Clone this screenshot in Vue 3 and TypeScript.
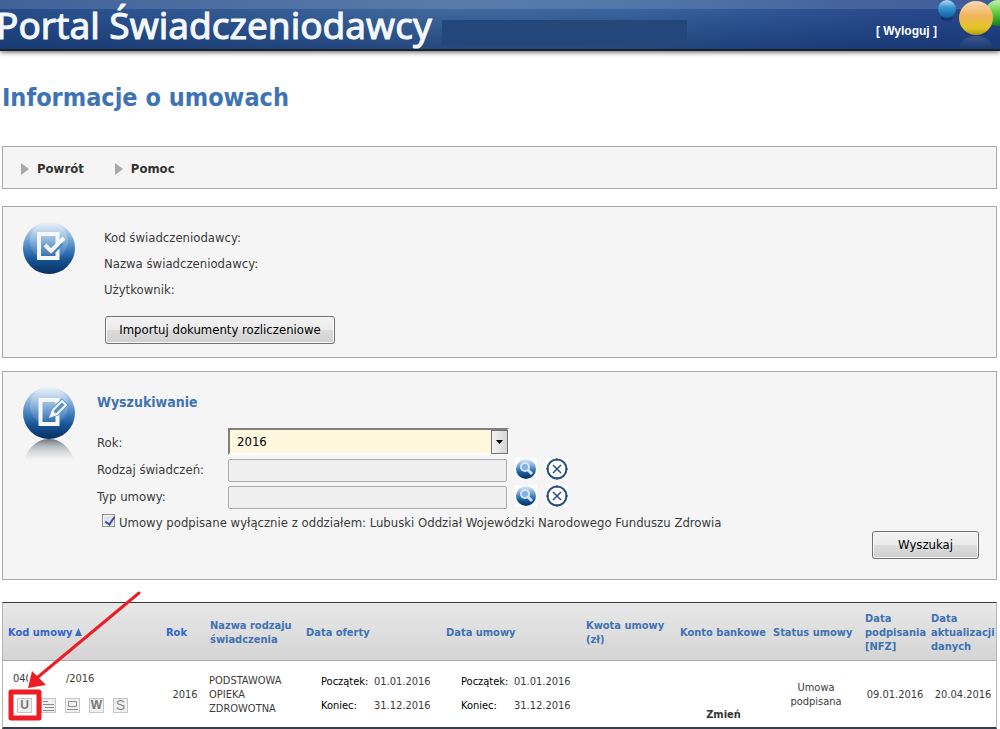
<script setup lang="ts">
import { ref } from 'vue'

const year = ref('2016')
const kind = ref('')
const contractType = ref('')
const onlyBranch = ref(true)

const columns = [
  { key: 'code', lines: ['Kod umowy'], sorted: true, active: true },
  { key: 'year', lines: ['Rok'], sorted: false, active: true },
  { key: 'name', lines: ['Nazwa rodzaju', 'świadczenia'] },
  { key: 'offer', lines: ['Data oferty'] },
  { key: 'contract', lines: ['Data umowy'] },
  { key: 'amount', lines: ['Kwota umowy', '(zł)'] },
  { key: 'account', lines: ['Konto bankowe'] },
  { key: 'status', lines: ['Status umowy'] },
  { key: 'signed', lines: ['Data', 'podpisania', '[NFZ]'] },
  { key: 'updated', lines: ['Data', 'aktualizacji', 'danych'] },
]
const lookups = [
  { id: 'kind', label: 'Rodzaj świadczeń:', model: kind },
  { id: 'type', label: 'Typ umowy:', model: contractType },
]
</script>

<template>
  <div class="page">
    <header class="top">
      <div class="brand">Portal Świadczeniodawcy</div>
      <div class="mask"></div>
      <a class="logout" href="#">[ Wyloguj ]</a>
      <svg class="balls" width="64" height="49" viewBox="0 0 64 49" aria-hidden="true">
        <defs>
          <linearGradient id="bb" x1="0" y1="0" x2="0" y2="1">
            <stop offset="0" stop-color="#b5dcf0" /><stop offset=".4" stop-color="#3d97d2" /><stop offset="1" stop-color="#0b5f9f" />
          </linearGradient>
          <linearGradient id="by" x1="0" y1="0" x2="0" y2="1">
            <stop offset="0" stop-color="#fbd9b4" /><stop offset=".45" stop-color="#f0b45a" /><stop offset=".8" stop-color="#e2c522" /><stop offset="1" stop-color="#b39a18" />
          </linearGradient>
          <linearGradient id="bg" x1="0" y1="0" x2="0" y2="1">
            <stop offset="0" stop-color="#c9f3ae" /><stop offset=".5" stop-color="#5bcb3c" /><stop offset="1" stop-color="#167c1c" />
          </linearGradient>
          <linearGradient id="br" x1="0" y1="0" x2="0" y2="1">
            <stop offset="0" stop-color="#8c96a0" stop-opacity=".3" /><stop offset="1" stop-color="#8c96a0" stop-opacity="0" />
          </linearGradient>
        </defs>
        <ellipse cx="11" cy="18" rx="6" ry="3" fill="#0c2450" opacity=".5" />
        <circle cx="11" cy="9" r="9" fill="url(#bb)" />
        <circle cx="62" cy="13" r="13" fill="url(#bg)" />
        <path d="M23 49a17 13 0 0 1 34 0z" fill="url(#br)" />
        <circle cx="40" cy="18" r="17" fill="url(#by)" />
      </svg>
    </header>

    <main>
      <h1>Informacje o umowach</h1>

      <nav class="box menu">
        <a href="#"><svg width="8" height="12" viewBox="0 0 8 12"><path d="M0 0L8 6L0 12z" fill="#a9a9a9" /></svg>Powrót</a>
        <a href="#"><svg width="8" height="12" viewBox="0 0 8 12"><path d="M0 0L8 6L0 12z" fill="#a9a9a9" /></svg>Pomoc</a>
      </nav>

      <section class="box provider">
        <svg class="orb" width="54" height="54" viewBox="0 0 54 54" aria-hidden="true">
          <defs>
            <linearGradient id="orb" x1="0" y1="0" x2="0" y2="1">
              <stop offset="0" stop-color="#e6eff8" /><stop offset=".22" stop-color="#9dbfe2" /><stop offset=".5" stop-color="#4583c2" /><stop offset=".72" stop-color="#175596" /><stop offset="1" stop-color="#072f60" />
            </linearGradient>
            <linearGradient id="shine" x1="0" y1="0" x2="0" y2="1">
              <stop offset="0" stop-color="#fff" stop-opacity=".3" /><stop offset="1" stop-color="#fff" stop-opacity=".08" />
            </linearGradient>
          </defs>
          <circle cx="27" cy="27" r="26" fill="url(#orb)" />
          <circle cx="27" cy="20" r="19" fill="url(#shine)" />
          <path d="M17 13H35.500V37H17z" fill="none" stroke="#f4f8fc" stroke-width="4" />
          <path d="M32 30L40 22" stroke="#4583c2" stroke-width="4" />
          <path d="M23 24L29 30L42 17" fill="none" stroke="#f4f8fc" stroke-width="4" />
        </svg>
        <div class="provider-body">
          <p>Kod świadczeniodawcy:</p>
          <p>Nazwa świadczeniodawcy:</p>
          <p>Użytkownik:</p>
          <button type="button" class="btn import">Importuj dokumenty rozliczeniowe</button>
        </div>
      </section>

      <form class="box search" @submit.prevent>
        <svg class="orb" width="54" height="76" viewBox="0 0 54 76" aria-hidden="true">
          <defs>
            <linearGradient id="refl" x1="0" y1="0" x2="0" y2="1">
              <stop offset="0" stop-color="#59636d" stop-opacity=".9" /><stop offset=".35" stop-color="#8d959c" stop-opacity=".6" /><stop offset="1" stop-color="#b0b5ba" stop-opacity="0" />
            </linearGradient>
          </defs>
          <path d="M2 74C7 60 16 53 27 53S47 60 52 74z" fill="url(#refl)" />
          <circle cx="27" cy="27" r="26" fill="url(#orb)" />
          <circle cx="27" cy="20" r="19" fill="url(#shine)" />
          <path d="M18.500 14H35.500V38H18.500z" fill="none" stroke="#f4f8fc" stroke-width="4" />
          <path d="M30 29L31 24L40 15L44 19L35 28z" fill="#5d93c9" stroke="#5d93c9" stroke-width="4" />
          <path d="M30 29L31 24L40 15L44 19L35 28z" fill="#5d93c9" stroke="#f4f8fc" stroke-width="2" />
          <path d="M27 32L30 24L35 29z" fill="#f4f8fc" />
        </svg>
        <div class="search-body">
          <h2>Wyszukiwanie</h2>
          <div class="row">
            <label for="year">Rok:</label>
            <div class="select">
              <select id="year" v-model="year"><option>2016</option><option>2015</option></select>
              <span class="drop"><svg width="7" height="4" viewBox="0 0 7 4"><path d="M0 0H7L3.500 4z" fill="#000" /></svg></span>
            </div>
          </div>
          <div v-for="l in lookups" :key="l.id" class="row">
            <label :for="l.id">{{ l.label }}</label>
            <input :id="l.id" v-model="l.model.value" class="field" type="text" readonly />
            <button type="button" class="icon" aria-label="Szukaj">
              <svg width="22" height="22" viewBox="0 0 22 22">
                <circle cx="11" cy="11" r="10" fill="url(#orb)" />
                <circle cx="10" cy="9" r="4" fill="#7fb0de" stroke="#d3e5f6" stroke-width="2" />
                <path d="M13 12L17 16" stroke="#d3e5f6" stroke-width="3" />
              </svg>
            </button>
            <button type="button" class="icon" aria-label="Wyczyść">
              <svg width="22" height="22" viewBox="0 0 22 22" fill="none" stroke="#2c4f7c">
                <circle cx="11" cy="11" r="9.500" stroke-width="2" />
                <path d="M7 7L15 15M15 7L7 15" stroke-width="1.500" />
                <path d="M11 0V3M11 19V22M0 11H3M19 11H22" stroke-width="1" />
              </svg>
            </button>
          </div>
          <label class="check">
            <input v-model="onlyBranch" type="checkbox" />
            <span>Umowy podpisane wyłącznie z oddziałem: Lubuski Oddział Wojewódzki Narodowego Funduszu Zdrowia</span>
          </label>
          <div class="actions"><button type="submit" class="btn submit">Wyszukaj</button></div>
        </div>
      </form>

      <div class="results">
        <table>
          <colgroup><col v-for="c in columns" :key="c.key" :class="'c-' + c.key" /></colgroup>
          <thead>
            <tr>
              <th v-for="c in columns" :key="c.key" scope="col" :class="{ active: c.active }">
                <template v-for="(line, i) in c.lines" :key="i"><br v-if="i" />{{ line }}</template>
                <svg v-if="c.sorted" class="sort" width="7" height="8" viewBox="0 0 7 8"><path d="M3.500 0L7 8H0z" fill="#3a6fb5" /></svg>
              </th>
            </tr>
          </thead>
          <tbody>
            <tr>
              <td class="code">
                <div class="number"><span>040</span><span class="cover"></span><span>/2016</span></div>
                <div class="tools">
                  <button type="button" class="tool bold">U</button>
                  <button type="button" class="tool" aria-label="Lista">
                    <svg width="13" height="13" viewBox="0 0 13 13"><path d="M1 2.500H6M1 5.500H12M3 8.500H12M1 11.500H12" stroke="#8c8c8c" /></svg>
                  </button>
                  <button type="button" class="tool" aria-label="Dokument">
                    <svg width="13" height="13" viewBox="0 0 13 13"><path d="M2.500 2.500H10.500V7.500H2.500zM1 10.500H12" fill="none" stroke="#8c8c8c" /></svg>
                  </button>
                  <button type="button" class="tool bold">W</button>
                  <button type="button" class="tool">S</button>
                </div>
              </td>
              <td class="center year">2016</td>
              <td class="kind">PODSTAWOWA<br />OPIEKA<br />ZDROWOTNA</td>
              <td v-for="n in 2" :key="n">
                <dl>
                  <dt>Początek:</dt><dd>01.01.2016</dd>
                  <dt>Koniec:</dt><dd>31.12.2016</dd>
                </dl>
              </td>
              <td></td>
              <td class="account"><a href="#">Zmień</a></td>
              <td class="center status">Umowa<br />podpisana</td>
              <td class="center signed">09.01.2016</td>
              <td class="center updated">20.04.2016</td>
            </tr>
          </tbody>
        </table>
        <svg class="pointer" width="150" height="134" viewBox="0 0 150 134" aria-hidden="true">
          <path d="M139 4L38 88" stroke="#ee1c24" stroke-width="3" stroke-linecap="round" />
          <path d="M28 99L32 82L46 96z" fill="#ee1c24" />
          <rect x="11" y="103" width="28" height="26" fill="none" stroke="#ee1c24" stroke-width="5" stroke-linejoin="round" />
        </svg>
      </div>
    </main>
  </div>
</template>

<style>
body { background: #fff; }
</style>

<style scoped>
* { box-sizing: border-box; }
.page {
  font-family: "DejaVu Sans Condensed", "DejaVu Sans", sans-serif;
  font-size: 13px;
  line-height: 16px;
  color: #3b3b3b;
  overflow: hidden;
}
.top {
  position: relative;
  display: flex;
  align-items: center;
  height: 51px;
  border-bottom: 2px solid #1c2028;
  box-shadow: 0 1px 5px #555;
  background:
    linear-gradient(rgba(255, 255, 255, .12) 9px, transparent 9px, rgba(10, 40, 95, .5)),
    linear-gradient(90deg, #264c8a, #41699f 45%, #3a659e 62%, #2b4e90 85%, #25468a);
}
.brand {
  font: 400 37px/48px "Noto Sans", sans-serif;
  -webkit-text-stroke: 1px #f4f8ff;
  color: #f4f8ff;
  white-space: nowrap;
  margin-left: -4px;
  width: 446px;
}
.mask { width: 245px; height: 26px; margin-top: 16px; background: #23467b; }
.logout {
  margin-left: auto;
  margin-right: 63px;
  margin-top: 12px;
  font: bold 12px/16px "Liberation Sans", Arial, sans-serif;
  color: #fff;
  text-decoration: none;
}
.balls { position: absolute; right: 0; top: 0; }
main { padding: 0 3px 0 2px; }
h1 { margin: 30px 0 32px; font-size: 25px; line-height: 33px; color: #4073b3; }
.box { border: 1px solid #a9a9a9; background: #f5f5f5; }
.menu { display: flex; gap: 31px; height: 43px; align-items: center; padding: 2px 0 0 18px; }
.menu a { display: flex; align-items: center; gap: 8px; font-weight: bold; color: #333; text-decoration: none; }
.provider { display: flex; margin-top: 17px; padding: 14px 19px 13px; min-height: 151px; }
.orb { flex: none; }
.provider-body { margin-left: 28px; padding-top: 9px; }
.provider-body p { margin: 0 0 10px; }
.btn {
  font: inherit;
  color: #000;
  height: 28px;
  border: 1px solid #707070;
  border-radius: 3px;
  background: linear-gradient(#f2f2f2, #ebebeb 50%, #ddd 50%, #cfcfcf);
  box-shadow: inset 0 0 0 1px #fbfbfb;
}
.import { margin: 8px 0 0 1px; width: 230px; padding: 0; }
.search { display: flex; margin-top: 13px; padding: 14px 17px 20px 19px; min-height: 209px; }
.search-body { flex: 1; margin-left: 21px; min-width: 0; }
h2 { margin: 8px 0 18px; font-size: 14px; line-height: 16px; color: #4073b3; }
.row { display: flex; align-items: center; height: 27px; }
.row label { width: 131px; padding-top: 2px; }
.select { position: relative; width: 281px; height: 27px; }
select {
  appearance: none;
  width: 100%;
  height: 27px;
  padding: 0 7px;
  font: inherit;
  color: #000;
  background: #fff8df;
  border: 2px solid #808080;
  border-right-color: #fff;
  border-bottom-color: #fff;
  border-radius: 0;
}
.drop {
  position: absolute;
  top: 2px;
  right: 1px;
  width: 17px;
  height: 24px;
  display: flex;
  align-items: center;
  justify-content: center;
  border: 1px solid #707070;
  background: linear-gradient(90deg, #f3f3f3, #d5d5d5);
  pointer-events: none;
}
.field { width: 279px; height: 23px; margin: 4px 8px 0 0; border: 1px solid #ababab; border-radius: 2px; background: #efefef; font: inherit; }
.icon { padding: 0; border: 0; background: #fbfdfe; width: 22px; height: 22px; margin: 0 9px 0 0; }
.icon svg { display: block; }
.check { display: flex; align-items: center; gap: 4px; margin: 4px 0 0 5px; height: 20px; }
.check input {
  appearance: none;
  width: 13px;
  height: 13px;
  margin: 0 0 6px;
  border: 1px solid #8e8f8f;
  background: #dfe3ea;
  box-shadow: inset 0 0 0 1px #f6f6f6;
}
.check input:checked::after {
  content: "";
  display: block;
  width: 4px;
  height: 8px;
  margin: 0 0 0 4px;
  border: solid #3c4f92;
  border-width: 0 2px 2px 0;
  transform: rotate(35deg);
}
.actions { display: flex; justify-content: flex-end; margin-top: -2px; }
.submit { width: 107px; }
.results { position: relative; margin-top: 22px; }
table { width: 100%; table-layout: fixed; border-collapse: separate; border-spacing: 0; font-size: 11px; line-height: 14px; border: 1px solid #b5b5b5; border-top-color: #3b3b3b; border-bottom: 2px solid #333d4c; }
.c-code { width: 158px; }
.c-year { width: 44px; }
.c-name { width: 96px; }
.c-offer, .c-contract { width: 140px; }
.c-amount { width: 94px; }
.c-account { width: 93px; }
.c-status { width: 92px; }
.c-signed { width: 66px; }
.c-updated { width: 70px; }
th {
  height: 58px;
  padding: 2px 0 0 5px;
  text-align: left;
  white-space: nowrap;
  color: #4073b3;
  background: linear-gradient(#e8e8e8, #d5d5d5);
  border-bottom: 1px solid #a9a9a9;
}
th.active { color: #3366cc; }
.sort { margin-left: 2px; }
td { height: 66px; padding: 0; color: #3b3b3b; }
.code { padding-left: 10px; vertical-align: top; }
.number { display: flex; margin-top: 11px; }
.cover { position: relative; width: 37px; margin: 0 1px 0 -4px; background: #fff; }
.tools { display: flex; gap: 9px; margin: 12px 0 0 4px; }
.tool {
  display: flex;
  align-items: center;
  justify-content: center;
  width: 15px;
  height: 15px;
  padding: 0;
  border: 1px solid #c6c6c6;
  background: #f0f0f0;
  color: #8c8c8c;
  font: 14px/13px "Liberation Sans", Arial, sans-serif;
}
.bold { font-weight: bold; font-size: 12px; color: #777; }
.center { text-align: center; padding: 2px 0 0 4px; }
.kind { padding: 2px 0 0 4px; }
dl { display: grid; grid-template-columns: 53px 1fr; row-gap: 10px; margin: 0 0 0 20px; }
dt { color: #000; }
dd { margin: 0; }
.account { text-align: center; vertical-align: bottom; padding: 0 0 5px 4px; }
.account a { font-weight: bold; color: #333; text-decoration: none; }
.pointer { position: absolute; left: -2px; top: -13px; }
</style>
